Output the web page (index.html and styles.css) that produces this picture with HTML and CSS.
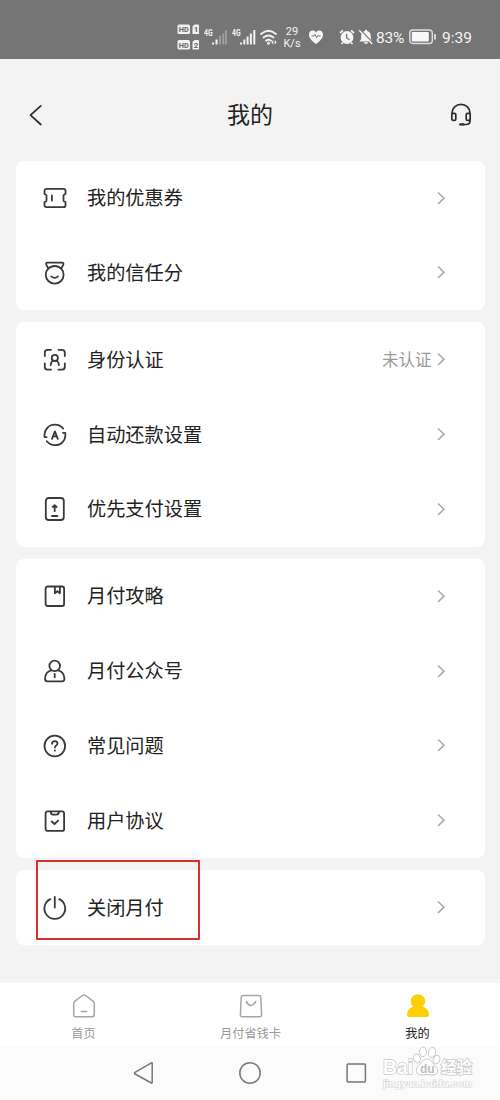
FILE: index.html
```html
<!DOCTYPE html>
<html lang="zh-CN">
<head>
<meta charset="utf-8">
<title>我的</title>
<link rel="stylesheet" href="styles.css">
</head>
<body>
<div class="screen">
  <div class="status">
    <svg class="hd" width="23" height="28" viewBox="0 0 23 28">
      <g fill="#f2f2f2"><rect x=".5" y=".5" width="12.5" height="9.5" rx="1.5"/><rect x=".5" y="16" width="12.5" height="9.5" rx="1.5"/>
      <path d="M15.5 2.5 17.5.5H21a1 1 0 0 1 1 1V10h-6.5zM15.5 18l2-2H21a1 1 0 0 1 1 1v8.500h-6.5z"/></g>
      <g class="hd-text"><text x="1.7" y="8.4" textLength="10" lengthAdjust="spacingAndGlyphs">HD</text><text x="1.7" y="23.900" textLength="10" lengthAdjust="spacingAndGlyphs">HD</text><text x="16.8" y="8.2">1</text><text x="16.8" y="23.700">2</text></g>
    </svg>
    <svg class="signal" width="24" height="17" viewBox="0 0 24 17">
      <text class="gen" x="0" y="7" textLength="8.5" lengthAdjust="spacingAndGlyphs">4G</text>
      <path d="M9 15.5v-2M12.5 15.5v-5" stroke="#f2f2f2" stroke-width="2"/><path d="M16 15.5V6.5M19.3 15.5v-11M22 15.5V1" stroke="#a0a0a0" stroke-width="1.8"/>
    </svg>
    <svg class="signal second" width="24" height="17" viewBox="0 0 24 17">
      <text class="gen" x="0" y="7" textLength="8.5" lengthAdjust="spacingAndGlyphs">4G</text>
      <path d="M9 15.5v-2M12.3 15.5v-5M15.6 15.5V7.5M18.9 15.5v-11M22.3 15.5V1" stroke="#f2f2f2" stroke-width="2"/>
    </svg>
    <svg class="wifi" width="18" height="17" viewBox="0 0 18 17" fill="none" stroke="#f2f2f2" stroke-width="1.8" stroke-linecap="round">
      <path d="M1 5q7.5-6.5 15 0M3.5 8.5q5-4 10 0M6 11.7q2.5-2 5 0"/><circle cx="8.5" cy="14.2" r=".6"/><path d="m13.3 11-2 2.2 2 2.2zm1.4 0 2 2.2-2 2.2z" fill="#f2f2f2" stroke="none"/>
    </svg>
    <div class="speed"><span>29</span><span>K/s</span></div>
    <svg class="heart" width="16" height="16" viewBox="0 0 16 16"><path d="M8 15C4 12 1 9.3 1 5.7 1 1.5 5.8.2 8 3.4 10.2.2 15 1.5 15 5.7 15 9.3 12 12 8 15z" fill="#f5f5f5"/><path d="M3.5 7h2.2L7 5.3l1.6 3.3L10 6.3l.6.7h2" fill="none" stroke="#757575"/></svg>
    <svg class="alarm" width="16" height="16" viewBox="0 0 16 16"><circle cx="8" cy="8.5" r="6.4" fill="#f5f5f5"/><path d="m1 4 3-2.6M15 4l-3-2.6M3.8 13.5l-1.2 1.6M12.2 13.5l1.2 1.6" stroke="#f5f5f5" stroke-width="1.7"/><path d="M7.6 4.8V9l3 1.8" fill="none" stroke="#757575" stroke-width="1.3"/></svg>
    <svg class="bell" width="16" height="16" viewBox="0 0 16 16"><path d="M8 .8c.8 0 1.2.5 1.2 1.2 2.5.7 3.6 2.5 3.6 5.1V10l1.7 2.5h-13L3.2 10V7.1C3.2 4.5 4.3 2.7 6.8 2 6.8 1.3 7.2.8 8 .8M5.8 13.2h4.4Q9.8 15 8 15t-2.2-1.8" fill="#f5f5f5"/><path d="m2.4.9 13 13.5" stroke="#757575" stroke-width="1.4"/><path d="m1.2 1.2 13 13.7" stroke="#f5f5f5" stroke-width="1.4"/></svg>
    <span class="percent">83%</span>
    <svg class="battery" width="28" height="16" viewBox="0 0 28 16"><rect x=".8" y="1" width="22.5" height="13.5" rx="3" fill="none" stroke="#dedede" stroke-width="1.4"/><rect x="2.8" y="3" width="17" height="9.5" rx="1" fill="#f8f8f8"/><path d="M26 5v5.5" stroke="#e5e5e5" stroke-width="1.7"/></svg>
    <span class="clock">9:39</span>
  </div>

  <header class="header">
    <svg width="24" height="24" viewBox="0 0 24 24" class="line"><path d="M15.8 2.8 5.5 12.2l10.3 9.3"/></svg>
    <h1>我的</h1>
    <svg width="24" height="24" viewBox="0 0 24 24" class="line"><path d="M3 10.5V10a9 8.6 0 0 1 18 0v.5M21 16v2q0 3.5-4 3.5h-4"/><rect x="2.8" y="10.4" width="4" height="7" rx="1.4"/><rect x="17.2" y="10.4" width="4" height="7" rx="1.4"/><path d="M11.3 21.4h3" stroke-width="2.4"/></svg>
  </header>

  <main class="cards">
    <section class="card">
      <div class="row"><svg class="icon" viewBox="0 0 26 26"><path d="M4.5 3.8h17q2 0 2 2v3q-2 .8-2 1.8v4.8q0 1 2 1.8v3q0 2-2 2h-17q-2 0-2-2v-3q2-.8 2-1.8v-4.8q0-1-2-1.8v-3q0-2 2-2zM9.9 10.5v5"/></svg><span class="label">我的优惠券</span><svg class="chev" viewBox="0 0 10 14"><path d="m2 1.5 6 5.7L2 13"/></svg></div>
      <div class="row"><svg class="icon" viewBox="0 0 26 26"><circle cx="12.7" cy="14.7" r="8.9"/><path d="M6.3 8.5 4.4 4.9q-.9-2.2 1.2-2.2h14.4q2.1 0 1.2 2.2l-1.9 3.6q-6.5-4.7-13 0M9.3 16.4q3.3 3 6.6 0"/></svg><span class="label">我的信任分</span><svg class="chev" viewBox="0 0 10 14"><path d="m2 1.5 6 5.7L2 13"/></svg></div>
    </section>
    <section class="card">
      <div class="row"><svg class="icon" viewBox="0 0 26 26"><path d="M9 2.8H5.5q-2.7 0-2.7 2.7V9M16.5 2.8H20q2.8 0 2.8 2.7V9M9 22.7H5.5q-2.7 0-2.7-2.7v-3.5M16.5 22.7H20q2.8 0 2.8-2.7v-3.5"/><circle cx="12.8" cy="10.9" r="3.1"/><path d="M8.7 18q.2-3.6 2.7-4.5M16.9 18q-.2-3.6-2.7-4.5"/></svg><span class="label">身份认证</span><span class="value">未认证</span><svg class="chev" viewBox="0 0 10 14"><path d="m2 1.5 6 5.7L2 13"/></svg></div>
      <div class="row"><svg class="icon" viewBox="0 0 26 26"><path d="M4.6 15.2H2.6C1.7 8.2 6.3 2.7 13 2.7q5 0 8.2 3.9M21 10.8h2.3c.9 7-3.7 12.4-10.3 12.4q-5 0-8.2-3.9M10 16.8l2.9-7.4 2.9 7.4M11 14.4h3.8"/></svg><span class="label">自动还款设置</span><svg class="chev" viewBox="0 0 10 14"><path d="m2 1.5 6 5.7L2 13"/></svg></div>
      <div class="row"><svg class="icon" viewBox="0 0 26 26"><rect x="3.8" y="2" width="18" height="22" rx="3"/><path d="M12.7 15.2V9.8M10.8 11l1.9-1.8 1.9 1.8M10 20h5.4"/></svg><span class="label">优先支付设置</span><svg class="chev" viewBox="0 0 10 14"><path d="m2 1.5 6 5.7L2 13"/></svg></div>
    </section>
    <section class="card">
      <div class="row"><svg class="icon" viewBox="0 0 26 26"><rect x="3.6" y="3.5" width="18.5" height="19.5" rx="2"/><path d="M12.9 3.8v6.4l2.5-2 2.5 2V3.8"/></svg><span class="label">月付攻略</span><svg class="chev" viewBox="0 0 10 14"><path d="m2 1.5 6 5.7L2 13"/></svg></div>
      <div class="row"><svg class="icon" viewBox="0 0 26 26"><circle cx="12.7" cy="7.9" r="5.3"/><path d="M9.2 12.4Q3.2 14 3 20.7q0 2.6 2.4 2.6h14.7q2.4 0 2.3-2.6-.2-6.7-6.2-8.3M12.7 16v3.2"/></svg><span class="label">月付公众号</span><svg class="chev" viewBox="0 0 10 14"><path d="m2 1.5 6 5.7L2 13"/></svg></div>
      <div class="row"><svg class="icon" viewBox="0 0 26 26"><circle cx="12.8" cy="13" r="10.3"/><path d="M10.1 10.8q0-2.7 2.7-2.7t2.7 2.4q0 1.2-1.3 2t-1.3 2M12.9 17.3v.4"/></svg><span class="label">常见问题</span><svg class="chev" viewBox="0 0 10 14"><path d="m2 1.5 6 5.7L2 13"/></svg></div>
      <div class="row"><svg class="icon" viewBox="0 0 26 26"><rect x="3.6" y="3.4" width="18.5" height="19.5" rx="2"/><path d="M8.7 3.6q.2 3 2.2 3h3.8q2 0 2.2-3M9.7 13.5l2.8 2.5 3.7-3.3"/></svg><span class="label">用户协议</span><svg class="chev" viewBox="0 0 10 14"><path d="m2 1.5 6 5.7L2 13"/></svg></div>
    </section>
    <section class="card closing">
      <div class="row"><svg class="icon" viewBox="0 0 26 26"><path d="M8.3 4.1a10.4 10.4 0 1 0 9 0M12.8 1.9v10.6"/></svg><span class="label">关闭月付</span><svg class="chev" viewBox="0 0 10 14"><path d="m2 1.5 6 5.7L2 13"/></svg></div>
      <div class="highlight"></div>
    </section>
  </main>

  <nav class="tabs">
    <div class="tab"><svg width="26" height="26" viewBox="0 0 26 26"><path d="M2.7 10.6q0-1.5 1-2.3l7.6-5.8q1.7-1.2 3.4 0l7.6 5.8q1 .8 1 2.3v11q0 2.2-2.2 2.2H4.9q-2.2 0-2.2-2.2zM10.3 18.5h5.4"/></svg><span>首页</span></div>
    <div class="tab"><svg width="26" height="26" viewBox="0 0 26 26"><path d="M5.3 2.5h15.4q2 0 2.1 2l.8 17q.1 2.3-2.1 2.3h-17q-2.2 0-2.1-2.3l.8-17q.1-2 2.1-2zM8.2 8.5q4.8 8 9.6 0"/></svg><span>月付省钱卡</span></div>
    <div class="tab active"><svg width="26" height="26" viewBox="0 0 26 26"><path d="M13 1.2c7.8 0 9.2 9 4.5 12.4 3.9 1.1 6.5 4.4 6.5 8.4q0 2-2 2H4q-2 0-2-2c0-4 2.6-7.3 6.5-8.4C3.8 10.2 5.2 1.2 13 1.2z"/></svg><span>我的</span></div>
  </nav>

  <div class="sysbar">
    <svg width="24" height="24" viewBox="0 0 24 24"><path d="M20.2 2.2v19.6q-.2.5-.8.2L3 13q-1-.8 0-1.6l16.4-9.5q.6-.3.8.3z"/></svg>
    <svg width="24" height="24" viewBox="0 0 24 24"><circle cx="12" cy="12" r="10.2"/></svg>
    <svg width="24" height="24" viewBox="0 0 24 24"><rect x="3.1" y="3" width="18.3" height="18" rx="1"/></svg>
    <svg class="watermark" width="96" height="46" viewBox="0 0 96 46">
      <g fill="#fff" stroke="#c9c9c9" stroke-width="1"><ellipse cx="38" cy="12.5" rx="3.3" ry="4.5" transform="rotate(-20 38 12.5)"/><ellipse cx="44" cy="5.8" rx="3.4" ry="4.8"/><ellipse cx="53" cy="6.5" rx="3.5" ry="5" transform="rotate(12 53 6.5)"/><ellipse cx="57.5" cy="13.5" rx="3.2" ry="4.4" transform="rotate(22 57.5 13.5)"/>
      <path d="M48 13c4 0 5 4 7.5 6.2 4.5 3.8 4 9.8-1.5 9.8q-6-1-12 0c-5 0-6.5-6-2-9.8C42.500 17 44 13 48 13z"/></g>
      <g class="wm-main"><text x="4" y="27.500" textLength="30" lengthAdjust="spacingAndGlyphs">Bai</text><text class="wm-du" x="41" y="26.500">du</text><text class="wm-cn" x="62" y="26.500" textLength="31">经验</text></g>
      <text class="wm-url" x="4" y="40.500" textLength="89" lengthAdjust="spacingAndGlyphs">jingyan.baidu.com</text>
    </svg>
  </div>
</div>
</body>
</html>
```
FILE: styles.css
```css
* { box-sizing: border-box; }
body { margin: 0; font-family: "Noto Sans CJK SC", sans-serif; }
svg { display: block; flex: none; }

.screen {
  display: flex;
  flex-direction: column;
  width: 500px;
  height: 1100px;
  background: #f3f3f3;
  color: #222;
  overflow: hidden;
}

.status {
  display: flex;
  align-items: center;
  height: 59px;
  padding: 15px 0 0 177px;
  background: #757575;
  color: #f5f5f5;
  font-family: Roboto, sans-serif;
  white-space: nowrap;
}
.hd { margin-top: 1px; }
.hd-text { font: bold 8px Roboto, sans-serif; fill: #666; }
.gen { font: bold 9px Roboto, sans-serif; fill: #f5f5f5; }
.signal { margin-left: 4px; }
.wifi { margin-left: 4px; }
.speed {
  display: flex;
  flex-direction: column;
  align-items: center;
  width: 18px;
  margin-left: 5px;
  padding-top: 1px;
  font-size: 11px;
  line-height: 12px;
}
.heart { margin-left: 7px; }
.alarm { margin-left: 15px; }
.bell { margin-left: 3px; }
.percent { width: 31px; margin: 2px 0 0 2px; font-size: 15.5px; letter-spacing: -.2px; }
.battery { margin-left: 2px; }
.clock { margin: 2px 0 0 5px; font-size: 15.5px; }

.header {
  display: flex;
  align-items: center;
  justify-content: space-between;
  height: 101.6px;
  padding: 10px 27px 0 25px;
}
.header h1 { margin: 0 0 3px 2px; font-size: 23px; font-weight: 400; line-height: 34px; }
.line { fill: none; stroke: #2c2c2c; stroke-width: 1.7; stroke-linecap: round; stroke-linejoin: round; }

.cards {
  display: flex;
  flex-direction: column;
  gap: 12px;
  height: 822.4px;
  padding: 0 15px 0 16px;
}
.card { position: relative; border-radius: 8px; background: #fff; }
.row {
  display: flex;
  align-items: center;
  height: 74.85px;
  padding: 0 39.5px 0 26px;
}
.icon {
  width: 26px;
  height: 26px;
  margin-right: 19px;
  fill: none;
  stroke: #393939;
  stroke-width: 1.8;
  stroke-linecap: round;
  stroke-linejoin: round;
}
.label { flex: 1; margin-bottom: 2px; font-size: 19.2px; line-height: 28px; }
.value { margin: 0 4px 1px 0; color: #999; font-size: 16.5px; line-height: 24px; }
.chev { width: 10px; height: 14px; margin-bottom: 1px; fill: none; stroke: #aaa; stroke-width: 1.6; }
.highlight {
  position: absolute;
  left: 20px;
  top: -10px;
  width: 164px;
  height: 80px;
  border: 2px solid #d9302c;
  border-radius: 1px;
}

.tabs {
  display: grid;
  grid-template-columns: repeat(3, 167px);
  height: 63px;
  background: #fff;
}
.tab {
  display: flex;
  flex-direction: column;
  align-items: center;
  gap: 5px;
  padding-top: 10px;
  color: #999;
  font-size: 12.2px;
  line-height: 18px;
}
.tab svg { fill: none; stroke: #a6a6a6; stroke-width: 1.5; stroke-linecap: round; stroke-linejoin: round; }
.tab.active { color: #222; }
.tab.active svg { fill: #ffd000; stroke: none; }

.sysbar {
  position: relative;
  display: flex;
  gap: 82px;
  height: 54px;
  padding: 15px 0 0 132px;
  background: #fbfbfb;
  fill: none;
  stroke: #777;
  stroke-width: 1.5;
}
.watermark { position: absolute; left: 379px; top: 0; }
.watermark text { stroke: #c9c9c9; stroke-width: 1.4; fill: #fff; paint-order: stroke; font-family: "Liberation Sans", "Noto Sans CJK SC", sans-serif; font-weight: bold; }
.wm-main { font-size: 20px; }
.watermark .wm-du { font-size: 12px; stroke: none; fill: #bdbdbd; }
.watermark .wm-cn { font-size: 15.5px; stroke-width: 1.6; }
.watermark .wm-url { font-size: 9.5px; stroke-width: 1.2; stroke: #d4d4d4; }
```
